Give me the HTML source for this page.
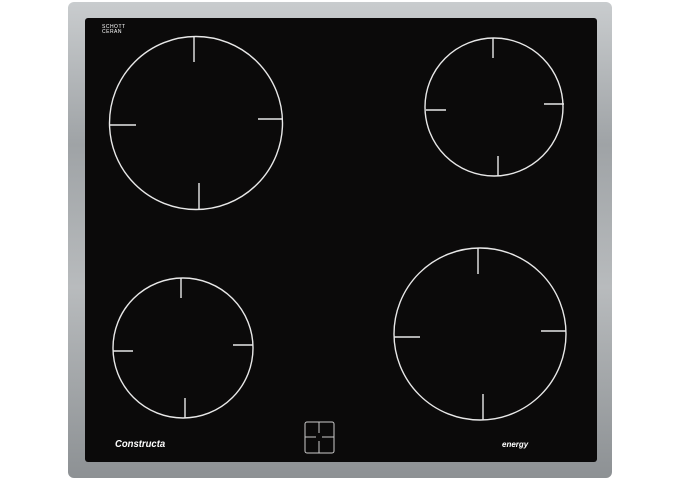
<!DOCTYPE html><html><head><style>
body{margin:0;width:680px;height:480px;background:#fff;overflow:hidden;position:relative}
.frame{position:absolute;left:68px;top:2px;width:544px;height:476px;border-radius:6px;background:linear-gradient(180deg,#c9ccce,#9fa3a6 30%,#b8bbbd 60%,#8d9194);}
.glass{position:absolute;left:85px;top:18px;width:512px;height:444px;background:#0b0a0a;border-radius:3px}
.t{position:absolute;color:#fff;font-family:"Liberation Sans",sans-serif}
</style></head><body>
<div class="frame"></div><div class="glass"></div>
<svg style="position:absolute;left:0;top:0" width="680" height="480" fill="none" stroke="#e8e8e8" stroke-width="1.4">
<circle cx="196" cy="123" r="86.5"/>
<path d="M194 36V62M258 119H283M110 125H136M199 183V209"/>
<circle cx="494" cy="107" r="69"/>
<path d="M493 38V58M544 104H564M426 110H446M498 156V176"/>
<circle cx="183" cy="348" r="70"/>
<path d="M181 278V298M233 345H253M113 351H133M185 398V418"/>
<circle cx="480" cy="334" r="86"/>
<path d="M478 248V274M541 331H566M394 337H420M483 394V420"/>
<g stroke-width="1" stroke="#ccc"><rect x="305" y="422" width="29" height="31" rx="2"/><path d="M305 437H316M322 437H334M319 422V433M319 441V453"/></g>
</svg>
<div class="t" style="left:102px;top:25px;font-size:5px;line-height:5px;letter-spacing:.5px">SCHOTT<br>CERAN</div>
<div class="t" style="left:115px;top:439px;font-size:10px;font-weight:bold;font-style:italic;transform:scaleX(.95);transform-origin:left">Constructa</div>
<div class="t" style="left:502px;top:440px;font-size:8px;font-weight:bold;font-style:italic">energy</div>
</body></html>
